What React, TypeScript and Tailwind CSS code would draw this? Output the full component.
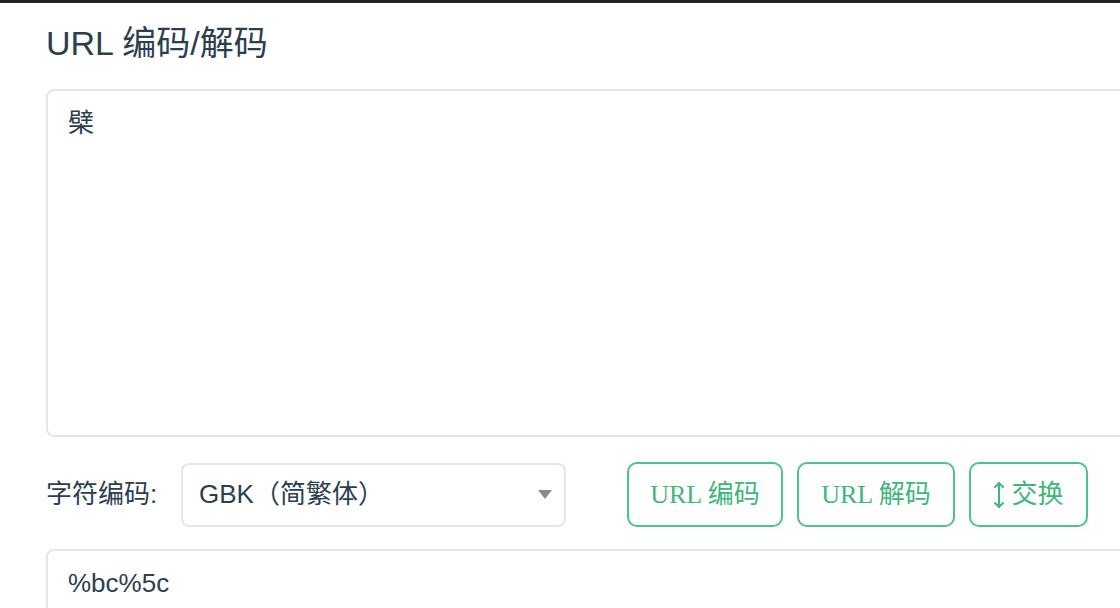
import React from "react";

const sans = "font-['Liberation_Sans','Noto_Sans_CJK_SC',sans-serif]";
const serif = "font-['Liberation_Serif','Noto_Sans_CJK_SC',serif]";

export default function App() {
  return (
    <div className={`w-[1120px] h-[608px] overflow-hidden bg-white ${sans}`}>
      <div className="h-[3px] bg-[#232323]" />
      <div className="pl-[46px]">
        <h1 className="mt-[20px] text-[34px] leading-[40px] text-[#2c3e50] font-normal">URL 编码/解码</h1>
        <div className="mt-[26px] w-[1090px] h-[348px] border-2 border-[#e3e7eb] rounded-[8px] px-[20px] py-[14px] text-[26px] leading-[36px] text-[#2c3e50]">
          檗
        </div>
        <div className="mt-[25px] flex items-center">
          <span className="text-[26px] text-[#2c3e50] w-[135px]">字符编码:</span>
          <div className="w-[385px] h-[64px] border-2 border-[#e3e7eb] rounded-[8px] flex items-center justify-between pl-[16px] pr-[12px]">
            <span className="text-[26px] text-[#2c3e50]">GBK（简繁体）</span>
            <svg width="14" height="9" viewBox="0 0 14 9"><path d="M0 0 L14 0 L7 9 Z" fill="#8a8a8a" /></svg>
          </div>
          <div className={`ml-[61px] flex gap-[14px] ${serif}`}>
            <button className="w-[156px] h-[65px] border-2 border-[#4cc38a] rounded-[10px] text-[26px] text-[#3fb67c] bg-white">URL 编码</button>
            <button className="w-[158px] h-[65px] border-2 border-[#4cc38a] rounded-[10px] text-[26px] text-[#3fb67c] bg-white">URL 解码</button>
            <button className="w-[119px] h-[65px] border-2 border-[#4cc38a] rounded-[10px] text-[26px] text-[#3fb67c] bg-white flex items-center justify-center gap-[6px]">
              <svg width="12" height="28" viewBox="0 0 12 28" fill="none" stroke="#3fb67c" strokeWidth="2" strokeLinecap="round" strokeLinejoin="round">
                <path d="M6 2 L6 26" />
                <path d="M2 6 L6 2 L10 6" />
                <path d="M2 22 L6 26 L10 22" />
              </svg>
              <span>交换</span>
            </button>
          </div>
        </div>
        <div className="mt-[22px] w-[1090px] h-[200px] border-2 border-[#e3e7eb] rounded-[8px] px-[20px] py-[14px] text-[26px] leading-[36px] text-[#2c3e50]">
          %bc%5c
        </div>
      </div>
    </div>
  );
}
